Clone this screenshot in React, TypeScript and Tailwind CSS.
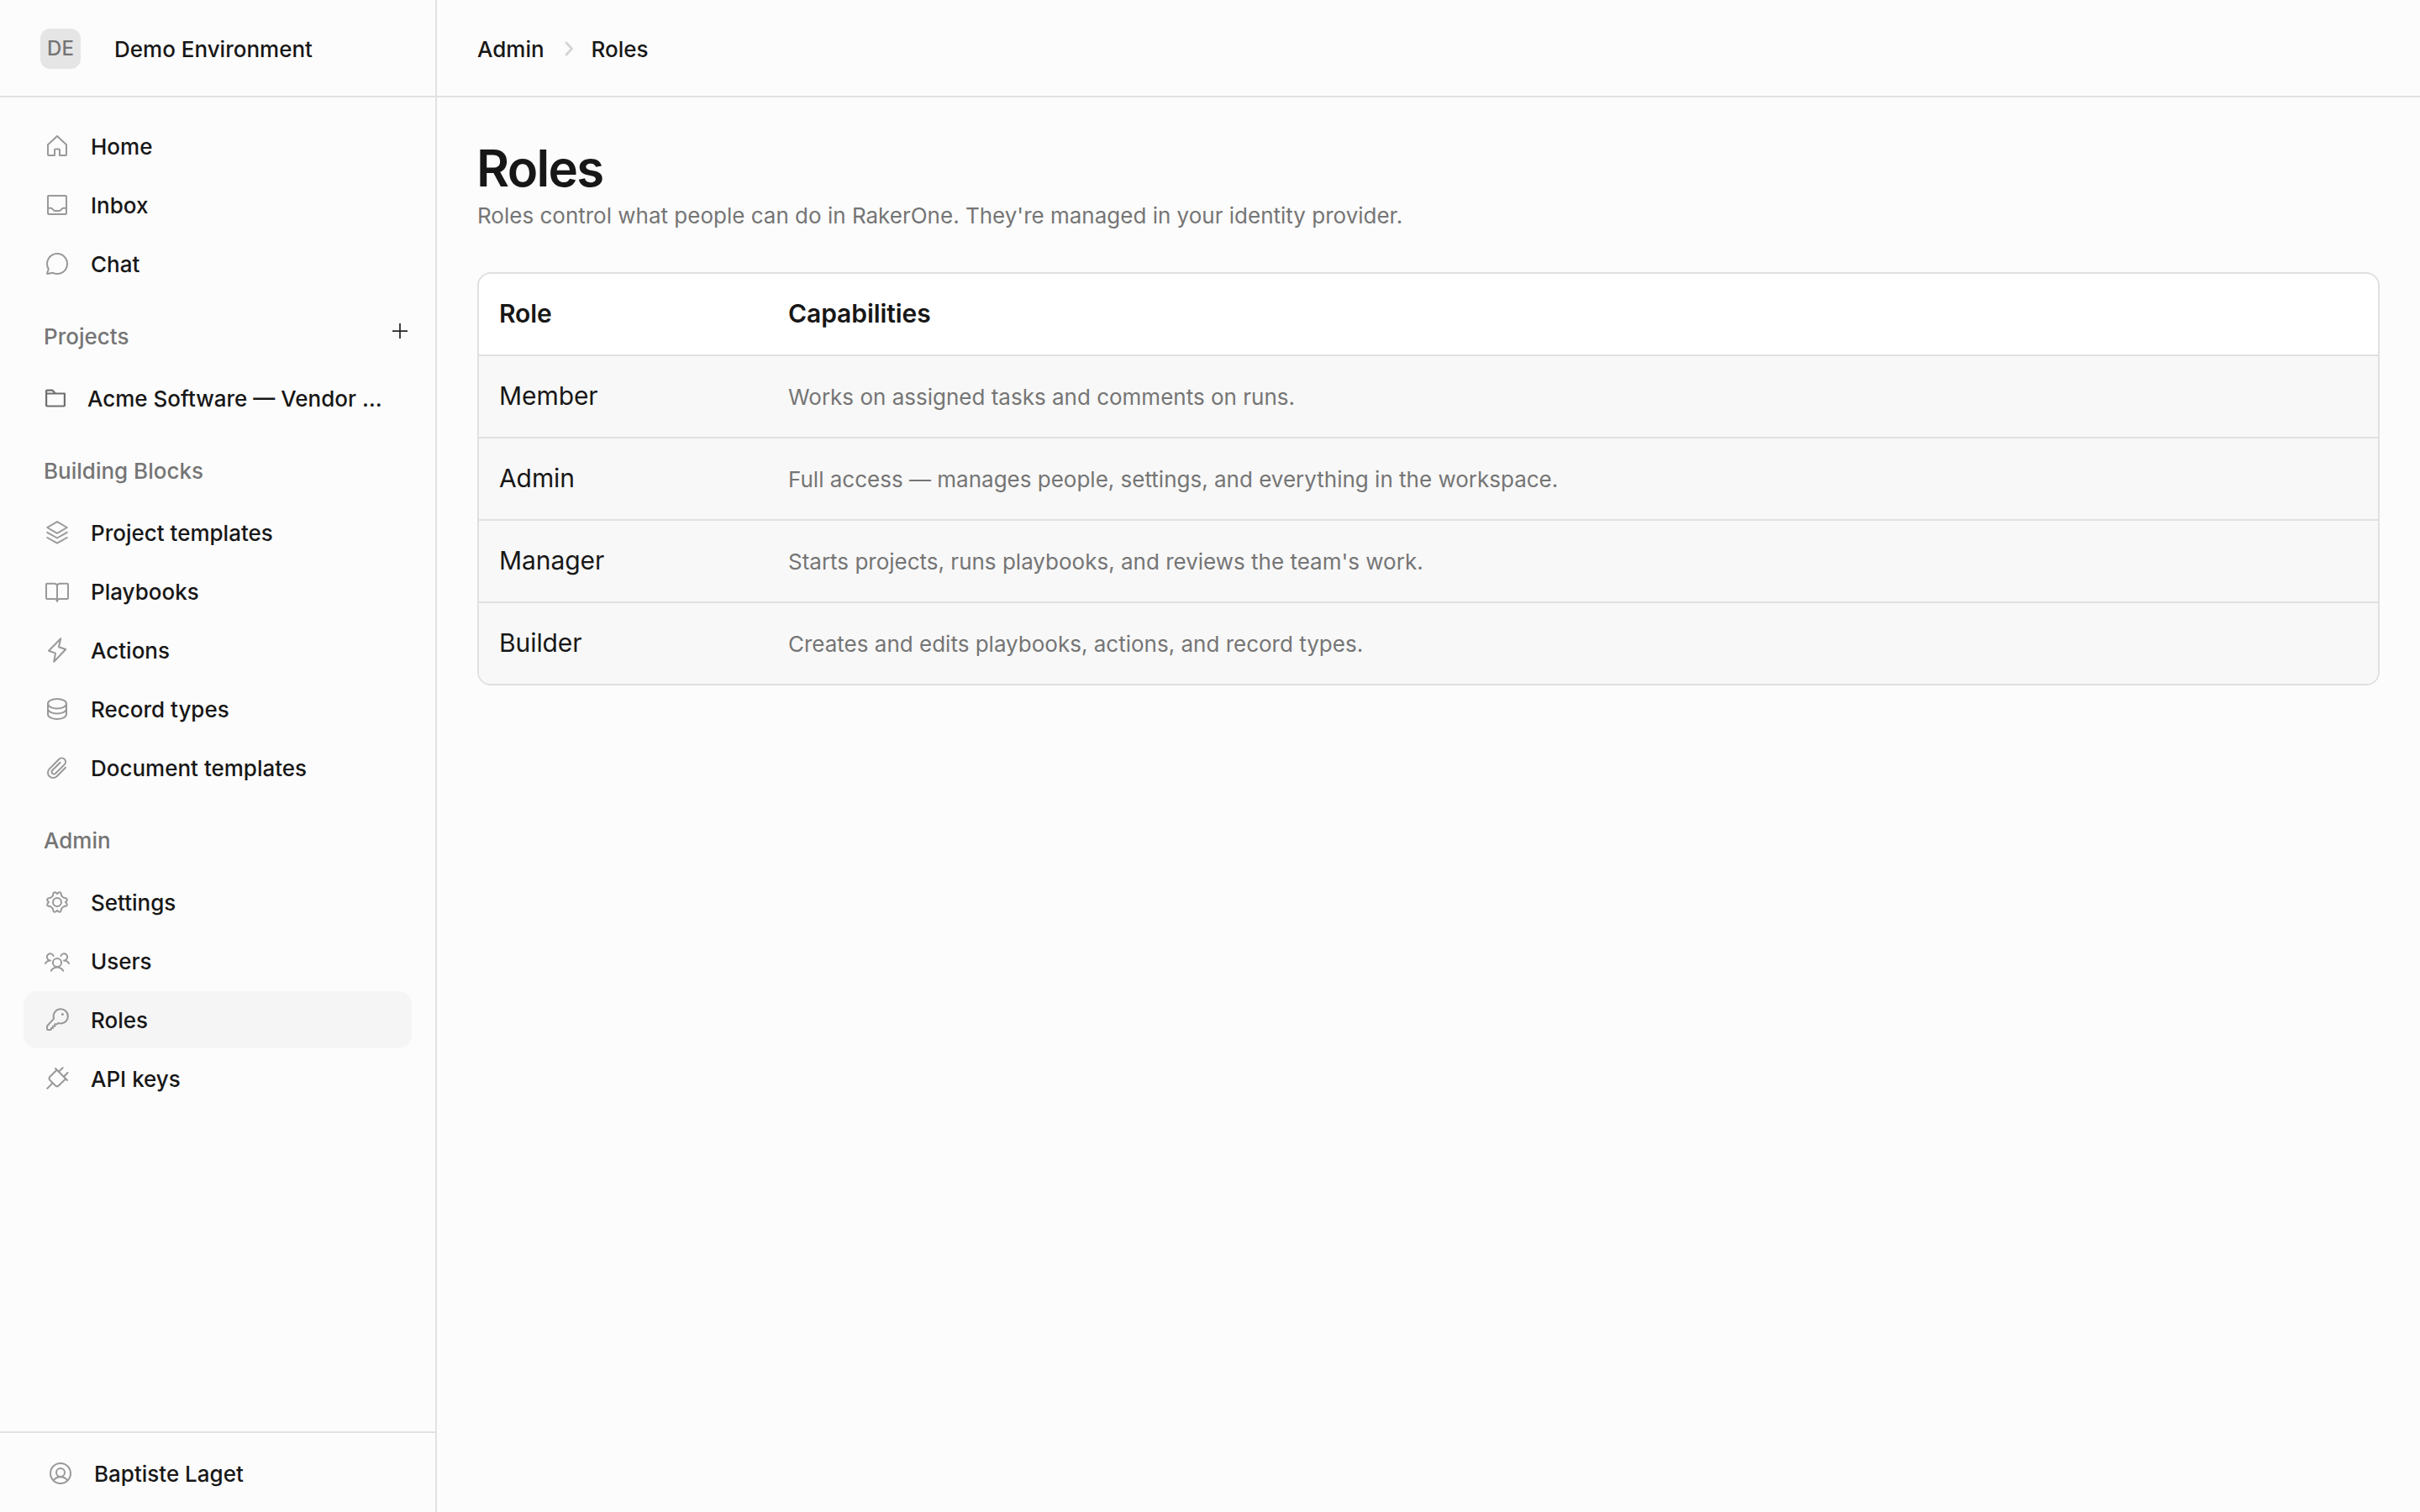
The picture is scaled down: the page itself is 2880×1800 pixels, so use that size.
import type { ReactNode } from "react";

function Icon({ children }: { children: ReactNode }) {
  return (
    <svg
      width="34"
      height="34"
      viewBox="0 0 34 34"
      fill="none"
      stroke="currentColor"
      strokeWidth="2"
      strokeLinecap="round"
      strokeLinejoin="round"
      className="shrink-0"
    >
      {children}
    </svg>
  );
}

const icons = {
  home: (
    <Icon>
      <path d="M6 15.200 17 4.900l11 10.300V27a1 1 0 0 1-1 1h-7v-6.500a1 1 0 0 0-1-1h-4a1 1 0 0 0-1 1V28H7a1 1 0 0 1-1-1z" />
    </Icon>
  ),
  inbox: (
    <Icon>
      <rect x="6" y="6" width="22" height="22" rx="1" />
      <path d="M6 20.800h3.500c2.500 0 2.500 3.200 5 3.200h5c2.500 0 2.500-3.200 5-3.200H28" />
    </Icon>
  ),
  chat: (
    <Icon>
      <path d="M17 5a12 12 0 1 1-5.200 22.800L5.600 29a.5.5 0 0 1-.5-.6l1.700-5.200A12 12 0 0 1 17 5z" />
    </Icon>
  ),
  layers: (
    <Icon>
      <path d="M17 4.200 28.800 11 17 17.800 5.200 11z" />
      <path d="M5.200 16.900 17 23.500l11.800-6.600" />
      <path d="M5.200 23 17 29.700 28.800 23" />
    </Icon>
  ),
  book: (
    <Icon>
      <path d="M17 10.500c0-1.500-1.500-2.800-3.500-2.800H5a1 1 0 0 0-1 1V25a1 1 0 0 0 1 1h9c1.800 0 3 1.200 3 3 0-1.800 1.200-3 3-3h9a1 1 0 0 0 1-1V8.700a1 1 0 0 0-1-1h-8.500c-2 0-3.500 1.300-3.500 2.800z" />
      <path d="M17 10.500V28" />
    </Icon>
  ),
  bolt: (
    <Icon>
      <path d="M21.200 3.300 7 17.800l8 2.800-1.800 10.100L27.200 16 19 13.200z" />
    </Icon>
  ),
  database: (
    <Icon>
      <ellipse cx="17" cy="10.800" rx="11" ry="5.800" />
      <path d="M6 10.800v12.500C6 26.500 10.900 29 17 29s11-2.500 11-5.700V10.800" />
      <path d="M6 17c0 3 4.900 5.500 11 5.500S28 20 28 17" />
    </Icon>
  ),
  clip: (
    <Icon>
      <path d="M27 16.800 16.600 27.200a6.200 6.200 0 0 1-8.800-8.800L19.300 6.700a4.500 4.500 0 0 1 6.400 6.400L15 23.700a2.600 2.600 0 0 1-3.700-3.700l9.300-9.200" />
    </Icon>
  ),
  gear: (
    <Icon>
      <circle cx="17" cy="17" r="5" />
      {[0, 90, 180, 270].map((angle) => (
        <path
          key={angle}
          transform={`rotate(${angle} 17 17)`}
          d="M17 6.900c.9-.7 1.800-1.900 3.200-1.700 1.500.3 1.600 1.900 1.700 3.100.1 1.300 2.500 3.700 3.800 3.800 1.200.1 2.800.2 3.100 1.700.2 1.400-1 2.300-1.700 3.200"
        />
      ))}
    </Icon>
  ),
  users: (
    <Icon>
      <circle cx="17" cy="19" r="5.100" />
      <path d="M9.800 28.600c3.500-5.500 10.900-5.500 14.400 0" />
      <path d="M12.600 11A4 4 0 1 0 7 15.800M3 20c1.200-2.200 3.200-3.400 6-3.400" />
      <path d="M21.400 11A4 4 0 1 1 27 15.800M31 20c-1.200-2.200-3.200-3.400-6-3.400" />
    </Icon>
  ),
  key: (
    <Icon>
      <path d="M13.100 15.600A8.600 8.600 0 1 1 18.300 20.900L17 22.200h-2.700v2.500h-2.500V27H10v1a1 1 0 0 1-1 1H6a1 1 0 0 1-1-1v-3.500z" />
      <circle cx="23.400" cy="10.400" r="1.500" fill="currentColor" stroke="none" />
    </Icon>
  ),
  plug: (
    <Icon>
      <path d="M15 5 29 19M18.800 8.800l4.900-4.600M25 14.800l4.500-4.800M5.300 28.700l6.200-6.300" />
      <path d="m16.600 6.800-8.100 8a3 3 0 0 0 0 4.200l6.300 6.300a3 3 0 0 0 4.200 0l8.200-8.100" />
    </Icon>
  ),
  user: (
    <Icon>
      <circle cx="17" cy="17" r="12" />
      <circle cx="17" cy="16" r="5" />
      <path d="M8.800 25.200c4-5.400 12.400-5.400 16.400 0" />
    </Icon>
  ),
};

const mainNav = [
  { label: "Home", icon: icons.home },
  { label: "Inbox", icon: icons.inbox },
  { label: "Chat", icon: icons.chat },
];

const buildingBlocks = [
  { label: "Project templates", icon: icons.layers },
  { label: "Playbooks", icon: icons.book },
  { label: "Actions", icon: icons.bolt },
  { label: "Record types", icon: icons.database },
  { label: "Document templates", icon: icons.clip },
];

const adminNav = [
  { label: "Settings", icon: icons.gear },
  { label: "Users", icon: icons.users },
  { label: "Roles", icon: icons.key, active: true },
  { label: "API keys", icon: icons.plug },
];

const roles = [
  { name: "Member", capabilities: "Works on assigned tasks and comments on runs." },
  { name: "Admin", capabilities: "Full access — manages people, settings, and everything in the workspace." },
  { name: "Manager", capabilities: "Starts projects, runs playbooks, and reviews the team's work." },
  { name: "Builder", capabilities: "Creates and edits playbooks, actions, and record types." },
];

function NavList({ items }: { items: { label: string; icon: ReactNode; active?: boolean }[] }) {
  return (
    <ul className="flex flex-col">
      {items.map((item) => (
        <li key={item.label} className="h-[70px]">
          <a
            className={`flex h-[68px] items-center gap-[23px] rounded-2xl pl-[23px] ${
              item.active ? "bg-[#f5f5f5]" : ""
            }`}
          >
            <span className="text-[#999999]">{item.icon}</span>
            <span className="pt-0.5">{item.label}</span>
          </a>
        </li>
      ))}
    </ul>
  );
}

function SectionTitle({ children }: { children: ReactNode }) {
  return <h2 className="flex h-[70px] items-center pl-6 text-[#757575]">{children}</h2>;
}

export default function App() {
  return (
    <div className="flex h-[1800px] w-[2880px] bg-[#fcfcfc] font-['Inter',sans-serif] text-[26px] leading-10 font-medium text-[#171717]">
      <aside className="flex w-[520px] shrink-0 flex-col border-r-2 border-[#e2e2e2]">
        <div className="flex h-[116px] shrink-0 items-center border-b-2 border-[#e2e2e2] pt-0.5 pl-12">
          <div className="flex size-12 items-center justify-center rounded-xl bg-[#e5e5e5] text-[24px] text-[#757575]">
            DE
          </div>
          <span className="ml-10 pt-0.5">Demo Environment</span>
        </div>

        <nav className="flex flex-1 flex-col px-7 pt-6">
          <NavList items={mainNav} />

          <div className="mt-4 flex items-start justify-between">
            <SectionTitle>Projects</SectionTitle>
            <svg
              width="18"
              height="18"
              viewBox="0 0 18 18"
              className="mt-[19px] mr-[5px]"
              stroke="#262626"
              strokeWidth="1.75"
            >
              <path d="M9 0v18M0 9h18" />
            </svg>
          </div>
          <a className="mt-1 flex h-[70px] items-center pl-[26px]">
            <svg
              width="24"
              height="24"
              viewBox="0 0 24 24"
              fill="none"
              stroke="#6f6f6f"
              strokeWidth="2.200"
              strokeLinejoin="round"
            >
              <path d="M1.100 5.500h21.800v14a1 1 0 0 1-1 1H2.100a1 1 0 0 1-1-1z" />
              <path d="M1.100 5.500V2.600a1 1 0 0 1 1-1h6.400l3.200 3.900" />
            </svg>
            <span className="ml-[26px] whitespace-nowrap">Acme Software — Vendor …</span>
          </a>

          <div className="mt-4">
            <SectionTitle>Building Blocks</SectionTitle>
            <div className="mt-1">
              <NavList items={buildingBlocks} />
            </div>
          </div>

          <div className="mt-4">
            <SectionTitle>Admin</SectionTitle>
            <div className="mt-1">
              <NavList items={adminNav} />
            </div>
          </div>
        </nav>

        <div className="flex h-24 shrink-0 items-center gap-[23px] border-t-2 border-[#e2e2e2] pt-0.5 pl-[55px]">
          <span className="text-[#999999]">{icons.user}</span>
          <span className="pt-0.5">Baptiste Laget</span>
        </div>
      </aside>

      <main className="flex min-w-0 flex-1 flex-col">
        <header className="flex h-[116px] shrink-0 items-center border-b-2 border-[#e2e2e2] pt-0.5 pl-12">
          <span className="pt-0.5">Admin</span>
          <svg
            width="10"
            height="18"
            viewBox="0 0 10 18"
            className="mr-[22px] ml-6"
            fill="none"
            stroke="#d4d4d4"
            strokeWidth="2.75"
            strokeLinecap="round"
            strokeLinejoin="round"
          >
            <path d="m2 2 6.500 7L2 16" />
          </svg>
          <span className="pt-0.5">Roles</span>
        </header>

        <div className="px-12 pt-12">
          <h1 className="-ml-px text-[60px] leading-[72px] font-semibold tracking-[-0.028em]">Roles</h1>
          <p className="pt-px font-normal text-[#757575]">
            Roles control what people can do in RakerOne. They're managed in your identity provider.
          </p>

          <div className="mt-[47px] overflow-hidden rounded-2xl border-2 border-[#e0e0e0] bg-white">
            <div className="grid h-24 grid-cols-[344px_1fr] items-center px-6 text-[30px] font-semibold tracking-[-0.08px]">
              <span className="pb-0.5">Role</span>
              <span className="pb-0.5">Capabilities</span>
            </div>
            {roles.map((role) => (
              <div
                key={role.name}
                className="grid h-[98px] grid-cols-[344px_1fr] items-center border-t-2 border-[#e0e0e0] bg-[#f8f8f8] px-6 font-normal"
              >
                <span className="pb-0.5 text-[30px] tracking-[-0.08px]">{role.name}</span>
                <span className="pt-0.5 text-[#757575]">{role.capabilities}</span>
              </div>
            ))}
          </div>
        </div>
      </main>
    </div>
  );
}
